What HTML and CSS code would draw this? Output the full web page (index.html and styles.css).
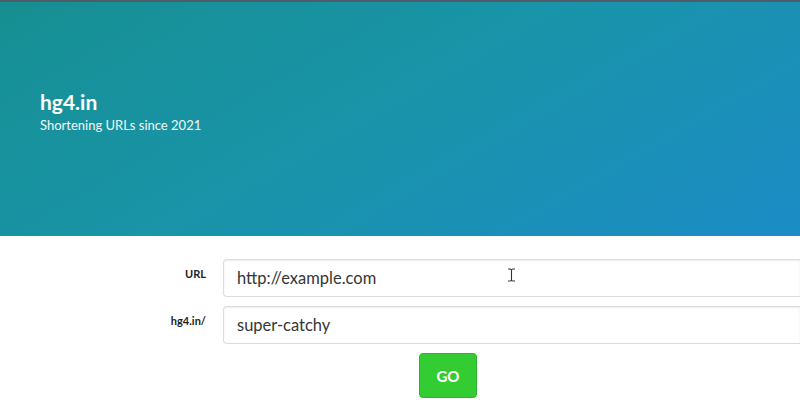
FILE: index.html
```html
<!DOCTYPE html>
<html lang="en">
<head>
<meta charset="utf-8">
<title>hg4.in</title>
<link rel="stylesheet" href="styles.css">
</head>
<body>
<section class="hero">
  <div class="hero-body">
    <h1 class="title">hg4.in</h1>
    <p class="subtitle">Shortening URLs since 2021</p>
  </div>
</section>
<section class="form-section">
  <div class="field">
    <label class="label">URL</label>
    <div class="control">
      <div class="input">http://example.com</div>
      <svg class="cursor" width="9" height="14" viewBox="0 0 9 14"><path d="M1 1h2.5M5.5 1H8M4.5 1.5v11M1 13h2.5M5.5 13H8M3.5 1.2c.6 0 1 .3 1 .8M5.5 1.2c-.6 0-1 .3-1 .8M3.5 12.8c.6 0 1-.3 1-.8M5.5 12.8c-.6 0-1-.3-1-.8" stroke="#333" stroke-width="1.1" fill="none"/></svg>
    </div>
  </div>
  <div class="field">
    <label class="label">hg4.in/</label>
    <div class="control">
      <div class="input">super-catchy</div>
    </div>
  </div>
  <div class="actions">
    <button class="button">GO</button>
  </div>
</section>
</body>
</html>
```
FILE: styles.css
```css
* { box-sizing: border-box; }
html, body { margin: 0; padding: 0; }
body {
  width: 800px;
  height: 416px;
  overflow: hidden;
  background: #fff;
  font-family: "Lato", "Open Sans", sans-serif;
  color: #363636;
}
.hero {
  height: 236px;
  border-top: 2px solid #4f5d6b;
  background: linear-gradient(150deg, #168f92 0%, #1994a8 45%, #1c8cc6 100%);
  display: flex;
  align-items: center;
}
.hero-body {
  padding: 0 40px;
  margin-top: -16px;
}
.title {
  margin: 0;
  font-size: 21px;
  font-weight: 700;
  color: #fff;
  line-height: 1.2;
}
.subtitle {
  margin: 4px 0 0;
  font-size: 13px;
  color: #f2f8f8;
  line-height: 1.2;
}
.form-section {
  padding-top: 23px;
  display: flex;
  flex-direction: column;
  gap: 9px;
}
.field {
  display: flex;
  gap: 17px;
}
.label {
  flex: none;
  width: 206px;
  text-align: right;
  font-size: 11px;
  font-weight: 700;
  color: #222;
  padding-top: 8px;
}
.control {
  position: relative;
  flex: 1;
}
.input {
  height: 38px;
  border: 1px solid #dcdcdc;
  border-right: none;
  border-radius: 4px 0 0 4px;
  box-shadow: inset 0 1px 2px rgba(10,10,10,0.08);
  padding: 0 13px;
  display: flex;
  align-items: center;
  font-size: 16.5px;
  color: #363636;
}
.cursor {
  position: absolute;
  left: 284px;
  top: 9px;
}
.actions {
  display: flex;
  padding-left: 419px;
}
.button {
  width: 58px;
  height: 45px;
  border: 1px solid #2cb52c;
  border-radius: 4px;
  background: #33cc33;
  color: #fff;
  font-family: inherit;
  font-weight: 700;
  font-size: 15px;
}
```
